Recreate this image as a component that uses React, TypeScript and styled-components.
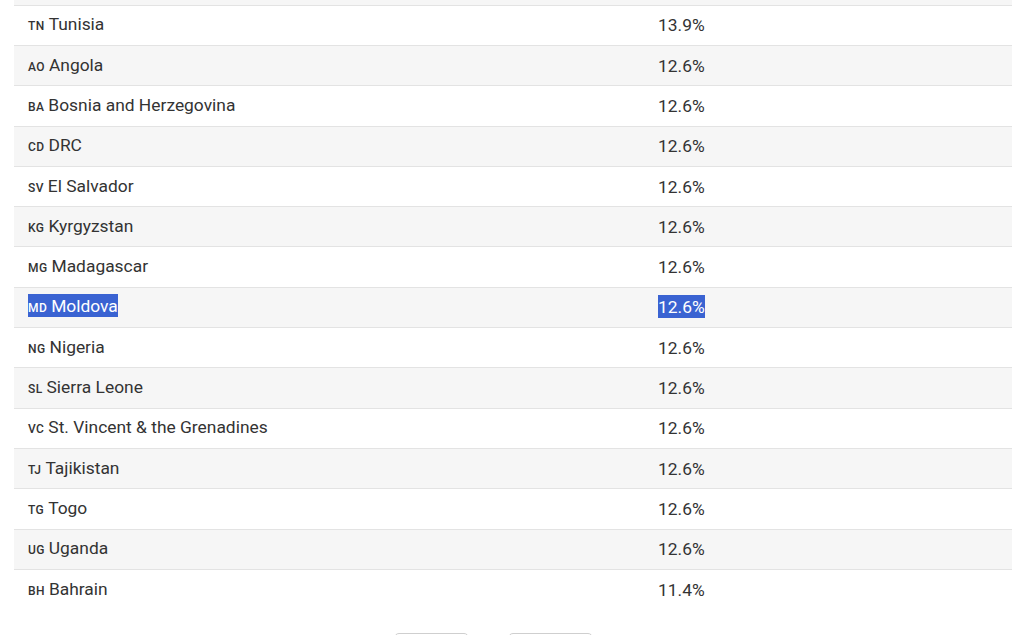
import styled, { createGlobalStyle } from "styled-components"

const GlobalStyle = createGlobalStyle`
  html, body {
    margin: 0;
    padding: 0;
    background: #ffffff;
    overflow: hidden;
  }
  body {
    font-family: Roboto, "Liberation Sans", Arial, sans-serif;
    color: #333333;
  }
`

interface RowData {
  code: string
  name: string
  rate: string
  picked?: boolean
}

const rows: RowData[] = [
  { code: "TN", name: "Tunisia", rate: "13.9%" },
  { code: "AO", name: "Angola", rate: "12.6%" },
  { code: "BA", name: "Bosnia and Herzegovina", rate: "12.6%" },
  { code: "CD", name: "DRC", rate: "12.6%" },
  { code: "SV", name: "El Salvador", rate: "12.6%" },
  { code: "KG", name: "Kyrgyzstan", rate: "12.6%" },
  { code: "MG", name: "Madagascar", rate: "12.6%" },
  { code: "MD", name: "Moldova", rate: "12.6%", picked: true },
  { code: "NG", name: "Nigeria", rate: "12.6%" },
  { code: "SL", name: "Sierra Leone", rate: "12.6%" },
  { code: "VC", name: "St. Vincent & the Grenadines", rate: "12.6%" },
  { code: "TJ", name: "Tajikistan", rate: "12.6%" },
  { code: "TG", name: "Togo", rate: "12.6%" },
  { code: "UG", name: "Uganda", rate: "12.6%" },
  { code: "BH", name: "Bahrain", rate: "11.4%" },
]

const Page = styled.div`
  padding: 0 12px 0 14px;
`

// list is scrolled: the row above Tunisia only peeks in at the top
const Table = styled.div`
  display: flex;
  flex-direction: column;
  margin-top: -34.6px;
`

const Row = styled.div<{ $shade: boolean; $last?: boolean }>`
  display: grid;
  grid-template-columns: 630px 1fr;
  align-items: center;
  height: 40.3px;
  box-sizing: border-box;
  background: ${({ $shade }) => ($shade ? "#f6f6f6" : "#ffffff")};
  border-bottom: ${({ $last }) => ($last ? "none" : "1px solid #e3e3e3")};
`

const Cell = styled.div`
  padding-left: 14px;
  padding-top: 1px;
  font-size: 17.4px;
  line-height: 23px;
  white-space: nowrap;
`

const Mark = styled.span<{ $picked?: boolean }>`
  padding: 2px 0 1px;
  background: ${({ $picked }) => ($picked ? "#3a63d2" : "transparent")};
  color: ${({ $picked }) => ($picked ? "#ffffff" : "#333333")};
`

const Code = styled.span`
  font-size: 12px;
  font-weight: 500;
  letter-spacing: 0.4px;
  margin-right: 4px;
`

const Pager = styled.div`
  display: flex;
  justify-content: center;
  gap: 39px;
  padding-right: 39px;
  margin-top: 23px;
`

// only the top edge of the pager buttons is in view
const PageButton = styled.button<{ $w: number }>`
  width: ${({ $w }) => $w}px;
  height: 34px;
  border: 1px solid #cfcfcf;
  border-radius: 5px;
  background: #ffffff;
`

export default function App() {
  return (
    <Page>
      <GlobalStyle />
      <Table>
        <Row $shade={true} />
        {rows.map((r, i) => (
          <Row key={r.code} $shade={i % 2 === 1} $last={i === rows.length - 1}>
            <Cell>
              <Mark $picked={r.picked}>
                <Code>{r.code}</Code>
                {r.name}
              </Mark>
            </Cell>
            <Cell>
              <Mark $picked={r.picked}>{r.rate}</Mark>
            </Cell>
          </Row>
        ))}
      </Table>
      <Pager>
        <PageButton $w={75} aria-label="Previous page" />
        <PageButton $w={85} aria-label="Next page" />
      </Pager>
    </Page>
  )
}
